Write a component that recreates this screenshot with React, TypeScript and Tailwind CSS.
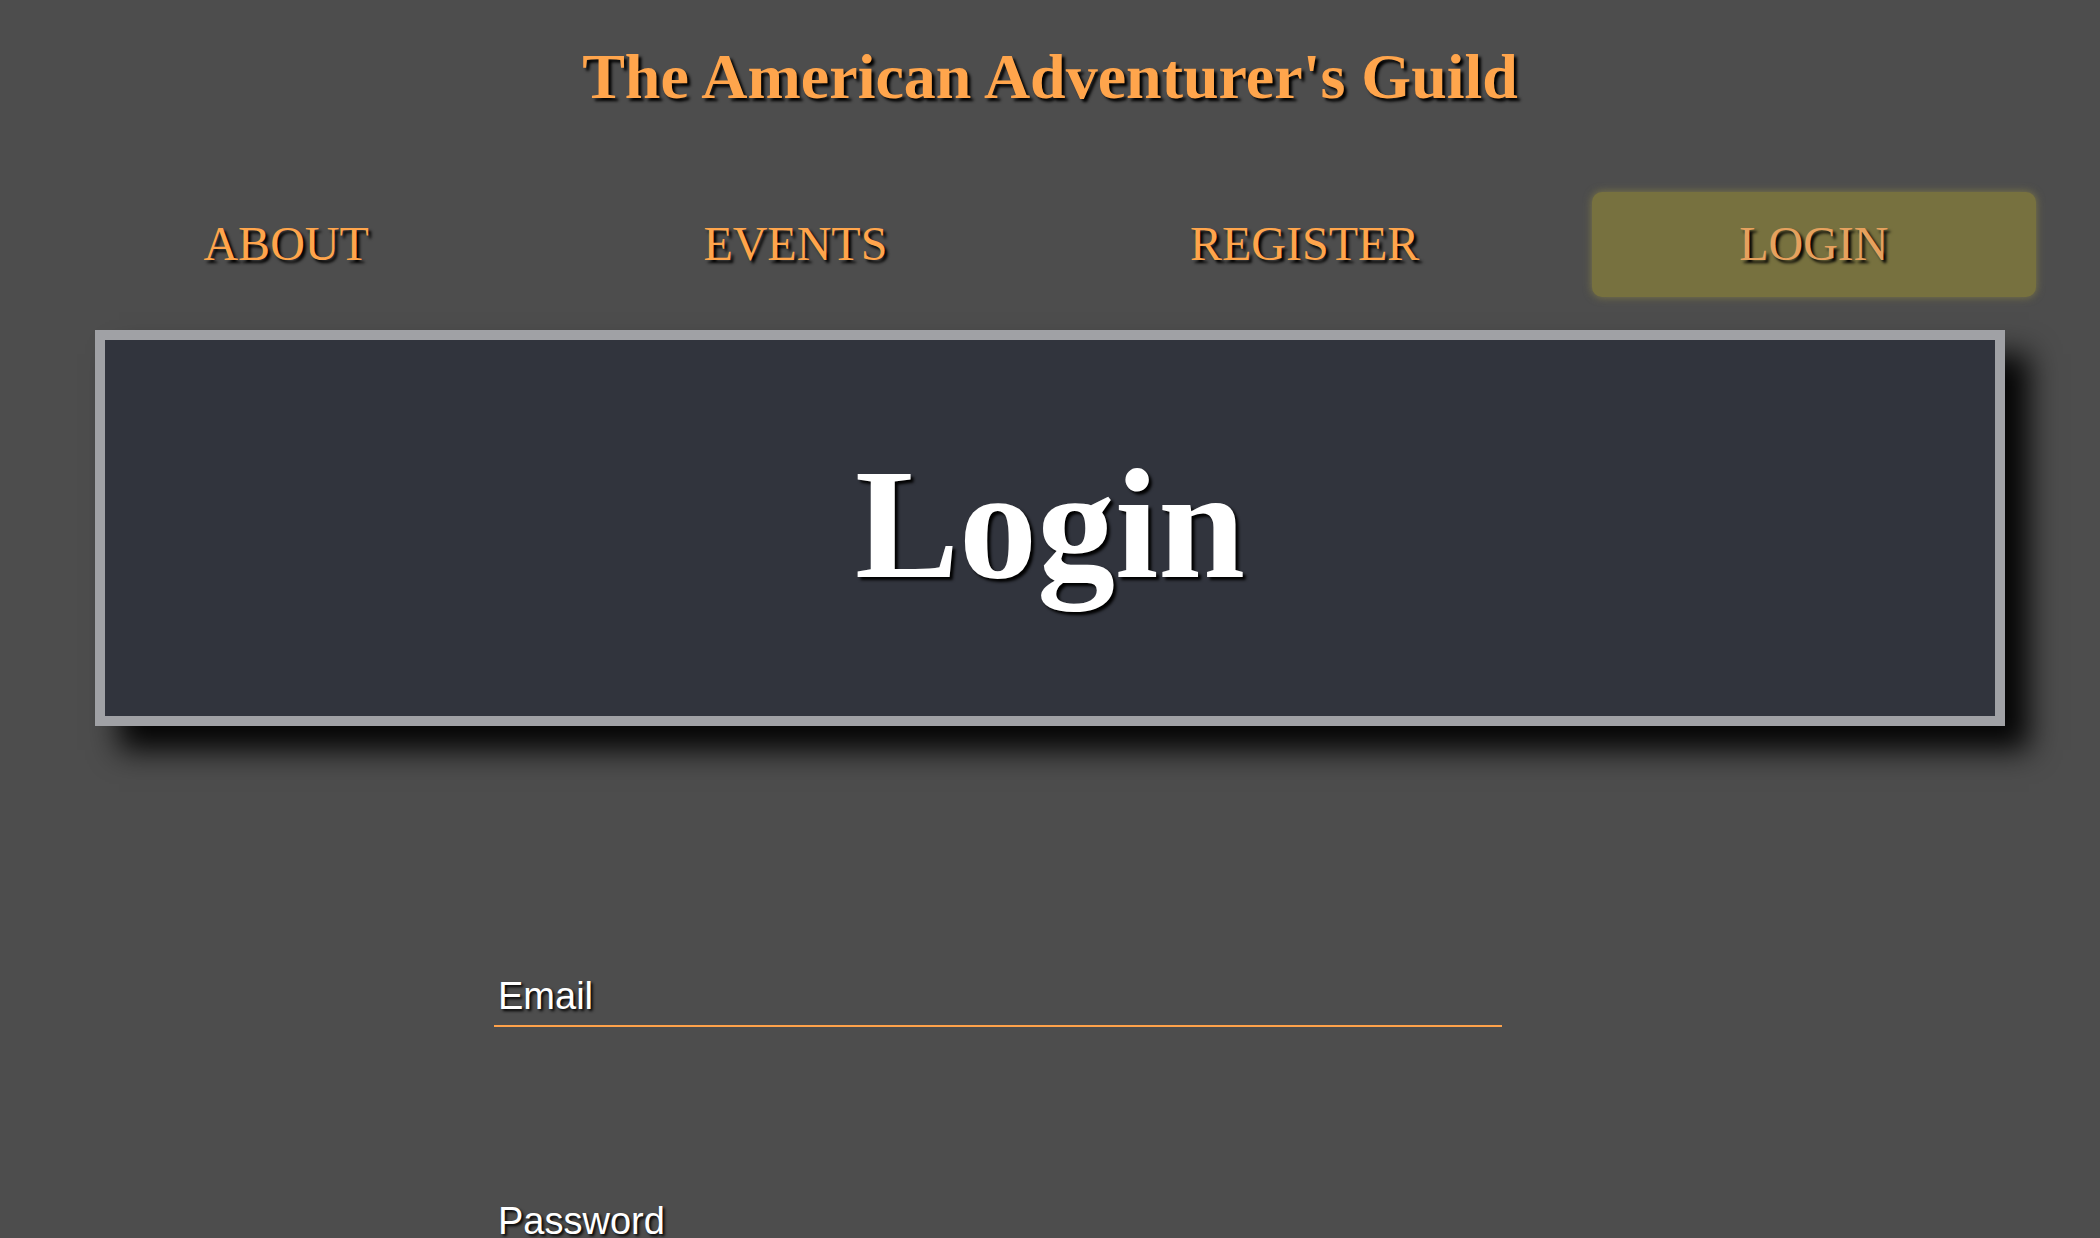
import React from 'react';

const navItems = ['ABOUT', 'EVENTS', 'REGISTER', 'LOGIN'];

function NavLink({ label, active }: { label: string; active: boolean }) {
  return (
    <a
      href="#"
      className={`flex h-[105px] items-center justify-center rounded-[10px] pb-[3px] text-[48px] leading-[normal] [text-shadow:3px_3px_3px_#000] ${
        active ? 'bg-[#77713f] text-[#e6a15e] shadow-[0_0_8px_rgba(140,132,70,0.8)]' : 'text-[#ffa54c]'
      }`}
    >
      {label}
    </a>
  );
}

function Field({ label }: { label: string }) {
  return (
    <div className="border-b-2 border-[#ffa24a] pb-[7px] pl-[4px]">
      <span className="block text-[38px] leading-[normal] text-white [font-family:'Liberation_Sans',Arial,sans-serif] [text-shadow:2px_2px_3px_#000]">
        {label}
      </span>
    </div>
  );
}

export default function App() {
  return (
    <div className="min-h-[1238px] overflow-hidden bg-[#4d4d4d] [font-family:'Liberation_Serif','Times_New_Roman',serif]">
      <header className="pt-[40px]">
        <h1 className="text-center text-[64px] font-bold leading-[normal] text-[#ffa54c] [text-shadow:3px_3px_3px_#000]">
          The American Adventurer's Guild
        </h1>
      </header>

      <nav className="mt-[78px] grid grid-cols-4 gap-x-[65px] px-[64px]">
        {navItems.map((item) => (
          <NavLink key={item} label={item} active={item === 'LOGIN'} />
        ))}
      </nav>

      <section className="mx-auto mt-[33px] box-border flex h-[396px] w-[1910px] items-center justify-center border-[10px] border-[#a0a1a5] bg-[#31343d] pb-[6px] shadow-[24px_24px_28px_rgba(0,0,0,0.95)]">
        <h2 className="text-[156px] font-bold leading-[normal] text-white [text-shadow:3px_3px_3px_#000]">Login</h2>
      </section>

      <form className="ml-[494px] mt-[249px] w-[1008px]">
        <Field label="Email" />
        <div className="mt-[173px]">
          <Field label="Password" />
        </div>
      </form>
    </div>
  );
}
